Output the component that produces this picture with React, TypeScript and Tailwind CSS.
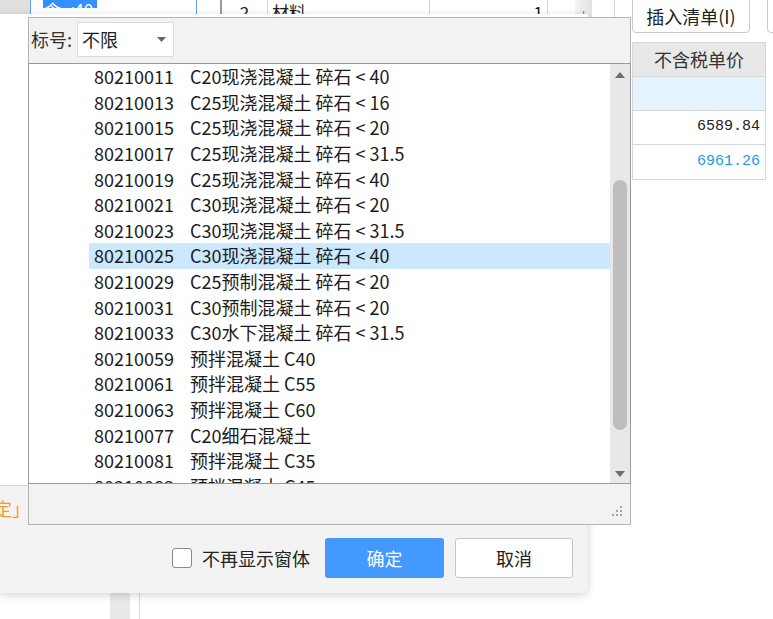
import React from 'react';

type Row = {
  code: string;
  name: string;
};

const rows: Row[] = [
  { code: '80210011', name: 'C20现浇混凝土 碎石 < 40' },
  { code: '80210013', name: 'C25现浇混凝土 碎石 < 16' },
  { code: '80210015', name: 'C25现浇混凝土 碎石 < 20' },
  { code: '80210017', name: 'C25现浇混凝土 碎石 < 31.5' },
  { code: '80210019', name: 'C25现浇混凝土 碎石 < 40' },
  { code: '80210021', name: 'C30现浇混凝土 碎石 < 20' },
  { code: '80210023', name: 'C30现浇混凝土 碎石 < 31.5' },
  { code: '80210025', name: 'C30现浇混凝土 碎石 < 40' },
  { code: '80210029', name: 'C25预制混凝土 碎石 < 20' },
  { code: '80210031', name: 'C30预制混凝土 碎石 < 20' },
  { code: '80210033', name: 'C30水下混凝土 碎石 < 31.5' },
  { code: '80210059', name: '预拌混凝土 C40' },
  { code: '80210061', name: '预拌混凝土 C55' },
  { code: '80210063', name: '预拌混凝土 C60' },
  { code: '80210077', name: 'C20细石混凝土' },
  { code: '80210081', name: '预拌混凝土 C35' },
  { code: '80210083', name: '预拌混凝土 C45' },
];

const selected = '80210025';

export default function App() {
  return (
    <div className="relative w-[773px] h-[619px] overflow-hidden bg-white font-['Noto_Sans_CJK_SC',sans-serif] text-[#1c1c1c]">
      {/* main window behind */}
      <div className="flex h-full">
        <div className="w-[632px] shrink-0 flex flex-col">
          <div className="flex h-[17px] overflow-hidden">
            <div className="w-[30px] h-[14px] bg-[#e2e0de]" />
            <div className="w-[167px] h-[16px] border border-t-0 border-[#5d9ff0] pl-[12px]">
              <div className="w-[54px] h-[8px] bg-[#3390ff] overflow-hidden flex items-end">
                <span className="text-white text-[17px] leading-[17px] mb-[-10px] pl-[1px]">含 &lt;40</span>
              </div>
            </div>
            <div className="w-[23px]" />
            <div className="w-[2px] border-x border-[#9a9a9a]" />
            <div className="w-[46px] border-r border-[#d4d4d4] text-center text-[17px] leading-[24px]">2</div>
            <div className="w-[162px] border-r border-[#d4d4d4] pl-[4px] text-[17px] leading-[24px]">材料</div>
            <div className="w-[118px] border-r border-[#d4d4d4] pr-[4px] text-right text-[17px] leading-[24px]">1</div>
            <div className="w-[27px]" />
            <div className="w-[17px] bg-gradient-to-r from-[#f4f4f4] to-[#e2e2e2] text-[#777] text-[11px] leading-[24px] text-center">ı</div>
            <div className="w-[23px] border-r border-[#d4d4d4]" />
          </div>
          <div className="mt-auto h-[26px] flex">
            <div className="ml-[110px] w-[20px] bg-[#e8e8e8]" />
            <div className="ml-[9px] border-l border-[#dcdcdc]" />
          </div>
        </div>
        <div className="flex-1 min-w-0 flex flex-col">
          <div className="flex -mt-[4px]">
            <div className="w-[118px] shrink-0 h-[37px] pt-[4px] rounded-[4px] border border-[#cacaca] bg-white flex items-center justify-center text-[18px] text-[#222]">
              插入清单(I)
            </div>
            <div className="ml-[17px] w-[20px] shrink-0 h-[37px] rounded-[4px] border border-[#cacaca]" />
          </div>
          <div className="mt-[9px] w-[134px] shrink-0 border border-[#d6d6d6]">
            <div className="h-[34px] bg-[#e8e8e8] border-b border-[#d6d6d6] flex items-center justify-center text-[18px] text-[#333]">
              不含税单价
            </div>
            <div className="h-[34px] bg-[#e5f3ff] border-b border-[#d6d6d6]" />
            <div className="h-[34px] border-b border-[#d6d6d6] flex items-center justify-end pr-[5px] font-['Liberation_Mono',monospace] text-[15px] text-[#222]">
              6589.84
            </div>
            <div className="h-[34px] flex items-center justify-end pr-[5px] font-['Liberation_Mono',monospace] text-[15px] text-[#1a9be6]">
              6961.26
            </div>
          </div>
        </div>
      </div>

      {/* dialog */}
      <div className="absolute left-0 top-[14px] w-[588px] h-[579px] bg-[#f3f3f3] rounded-br-[6px] shadow-[0_2px_8px_rgba(0,0,0,0.18)] flex flex-col">
        <div className="h-[472px] bg-white border-b border-[#d9d9d9]" />
        <div className="flex -ml-[24px] mt-[10px] text-[18px] leading-[24px] text-[#f59a23]">确定」</div>
        <div className="mt-auto mb-[15px] flex items-center justify-end pr-[15px]">
          <div className="w-[20px] h-[20px] rounded-[3px] border border-[#8a8a8a] bg-white" />
          <span className="ml-[10px] text-[18px] text-[#222]">不再显示窗体</span>
          <div className="ml-[15px] w-[119px] h-[40px] rounded-[3px] bg-[#4499ff] flex items-center justify-center text-[18px] text-white">
            确定
          </div>
          <div className="ml-[11px] w-[118px] h-[40px] rounded-[3px] border border-[#c6c6c6] bg-white flex items-center justify-center text-[18px] text-[#222]">
            取消
          </div>
        </div>
      </div>

      {/* dropdown popup */}
      <div className="absolute left-[28px] top-[17px] w-[603px] h-[508px] border border-[#b4b4b4] bg-[#f2f2f2] flex flex-col">
        <div className="h-[45px] pt-[4px] pl-[2px] flex items-start">
          <div className="h-[35px] flex items-center text-[18px] text-[#333]">标号:</div>
          <div className="ml-[5px] w-[97px] h-[35px] border border-[#dcdcdc] bg-white flex items-center pl-[4px] pr-[7px]">
            <span className="text-[18px] text-[#1c1c1c]">不限</span>
            <svg className="ml-auto" width="9" height="5" viewBox="0 0 9 5">
              <polygon points="0,0 9,0 4.5,5" fill="#666" />
            </svg>
          </div>
        </div>
        <div className="-mx-px h-[421px] border border-[#959ba1] bg-white flex">
          <div className="flex-1 overflow-hidden">
            {rows.map((row) => (
              <div
                key={row.code}
                className={
                  'ml-[60px] pl-[5px] h-[25.6px] flex items-center text-[18px] whitespace-nowrap ' +
                  (row.code === selected ? 'bg-[#cce8ff]' : '')
                }
              >
                <span className="w-[96px]">{row.code}</span>
                <span>{row.name}</span>
              </div>
            ))}
          </div>
          <div className="w-[20px] bg-[#e8e8e8] flex flex-col items-center pt-[8px] pb-[6px]">
            <svg width="10" height="6" viewBox="0 0 10 6">
              <polygon points="0,6 10,6 5,0" fill="#6e6e6e" />
            </svg>
            <div className="mt-[102px] w-[14px] h-[250px] rounded-full bg-[#bebebe]" />
            <svg className="mt-auto" width="10" height="6" viewBox="0 0 10 6">
              <polygon points="0,0 10,0 5,6" fill="#6e6e6e" />
            </svg>
          </div>
        </div>
        <div className="flex-1 flex items-end justify-end pr-[7px] pb-[7px]">
          <svg width="12" height="12" viewBox="0 0 12 12">
            <rect x="9" y="1" width="2" height="2" fill="#a3a3a3" />
            <rect x="9" y="5" width="2" height="2" fill="#a3a3a3" />
            <rect x="5" y="5" width="2" height="2" fill="#a3a3a3" />
            <rect x="9" y="9" width="2" height="2" fill="#a3a3a3" />
            <rect x="5" y="9" width="2" height="2" fill="#a3a3a3" />
            <rect x="1" y="9" width="2" height="2" fill="#a3a3a3" />
          </svg>
        </div>
      </div>
    </div>
  );
}
